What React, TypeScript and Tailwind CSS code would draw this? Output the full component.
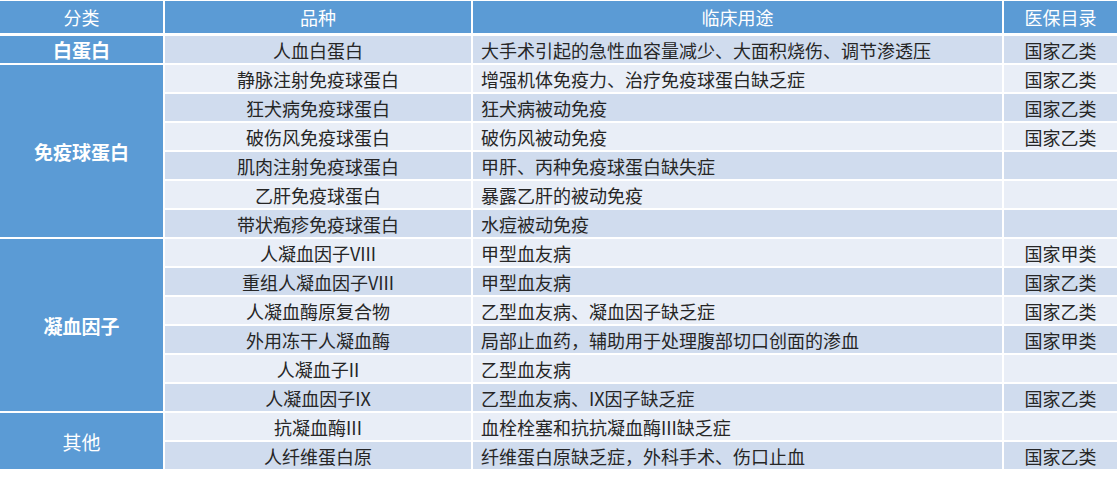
import React from "react";

type Row = { name: string; use: string; cat: string };

const groups: { label: string; bold: boolean; rows: Row[] }[] = [
  {
    label: "白蛋白",
    bold: true,
    rows: [{ name: "人血白蛋白", use: "大手术引起的急性血容量减少、大面积烧伤、调节渗透压", cat: "国家乙类" }],
  },
  {
    label: "免疫球蛋白",
    bold: true,
    rows: [
      { name: "静脉注射免疫球蛋白", use: "增强机体免疫力、治疗免疫球蛋白缺乏症", cat: "国家乙类" },
      { name: "狂犬病免疫球蛋白", use: "狂犬病被动免疫", cat: "国家乙类" },
      { name: "破伤风免疫球蛋白", use: "破伤风被动免疫", cat: "国家乙类" },
      { name: "肌肉注射免疫球蛋白", use: "甲肝、丙种免疫球蛋白缺失症", cat: "" },
      { name: "乙肝免疫球蛋白", use: "暴露乙肝的被动免疫", cat: "" },
      { name: "带状疱疹免疫球蛋白", use: "水痘被动免疫", cat: "" },
    ],
  },
  {
    label: "凝血因子",
    bold: true,
    rows: [
      { name: "人凝血因子VIII", use: "甲型血友病", cat: "国家甲类" },
      { name: "重组人凝血因子VIII", use: "甲型血友病", cat: "国家乙类" },
      { name: "人凝血酶原复合物", use: "乙型血友病、凝血因子缺乏症", cat: "国家乙类" },
      { name: "外用冻干人凝血酶", use: "局部止血药，辅助用于处理腹部切口创面的渗血", cat: "国家甲类" },
      { name: "人凝血子II", use: "乙型血友病", cat: "" },
      { name: "人凝血因子IX", use: "乙型血友病、IX因子缺乏症", cat: "国家乙类" },
    ],
  },
  {
    label: "其他",
    bold: false,
    rows: [
      { name: "抗凝血酶III", use: "血栓栓塞和抗抗凝血酶III缺乏症", cat: "" },
      { name: "人纤维蛋白原", use: "纤维蛋白原缺乏症，外科手术、伤口止血", cat: "国家乙类" },
    ],
  },
];

const spanClass: Record<number, string> = {
  1: "row-span-1",
  2: "row-span-2",
  6: "row-span-6",
};

export default function App() {
  let idx = 0;
  const cells: React.ReactNode[] = [];
  groups.forEach((g, gi) => {
    g.rows.forEach((r, ri) => {
      const dark = idx % 2 === 0;
      const bg = dark ? "bg-[#d0dcee]" : "bg-[#e9eef7]";
      if (ri === 0) {
        cells.push(
          <div
            key={`g${gi}`}
            className={`${spanClass[g.rows.length]} bg-[#5b9bd5] text-white flex items-center justify-center text-[19px] ${g.bold ? "font-bold" : "font-normal"}`}
          >
            {g.label}
          </div>
        );
      }
      cells.push(
        <div key={`n${idx}`} className={`${bg} flex items-center justify-center`}>
          {r.name}
        </div>,
        <div key={`u${idx}`} className={`${bg} flex items-center pl-[8px]`}>
          {r.use}
        </div>,
        <div key={`c${idx}`} className={`${bg} flex items-center justify-center`}>
          {r.cat}
        </div>
      );
      idx++;
    });
  });

  return (
    <div
      className="w-[1119px] h-[479px] bg-white pt-[1px] text-[18px] leading-none text-[#262626]"
      style={{ fontFamily: '"Noto Sans CJK SC", "Liberation Sans", sans-serif' }}
    >
      <div className="w-[1117px]">
        <div className="grid grid-cols-[163px_306px_529px_113px] gap-x-[2px] h-[32px] text-white">
          <div className="bg-[#5b9bd5] flex items-center justify-center">分类</div>
          <div className="bg-[#5b9bd5] flex items-center justify-center">品种</div>
          <div className="bg-[#5b9bd5] flex items-center justify-center">临床用途</div>
          <div className="bg-[#5b9bd5] flex items-center justify-center">医保目录</div>
        </div>
        <div className="mt-[3px] grid grid-cols-[163px_306px_529px_113px] auto-rows-[27px] gap-[2px]">
          {cells}
        </div>
      </div>
    </div>
  );
}
